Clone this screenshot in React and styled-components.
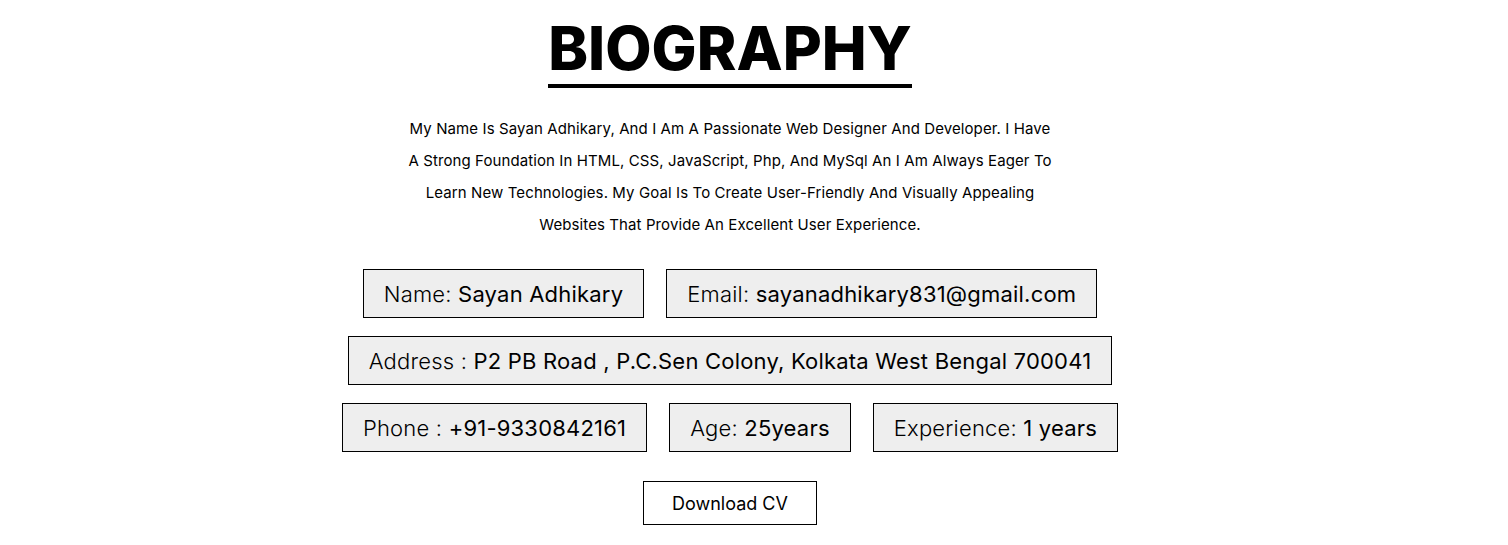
import React from 'react';
import styled, { createGlobalStyle } from 'styled-components';

const GlobalStyle = createGlobalStyle`
  * { box-sizing: border-box; }
  body {
    margin: 0;
    background: #fff;
    font-family: Inter, 'Noto Sans', sans-serif;
    color: #000;
  }
`;

const Section = styled.section`
  width: 1460px;
  padding-top: 14px;
  display: flex;
  flex-direction: column;
  align-items: center;
`;

const Title = styled.h1`
  display: inline-block;
  margin: 0;
  font-size: 60px;
  font-weight: 800;
  line-height: 68px;
  padding-bottom: 2px;
  border-bottom: 4px solid #000;
`;

const Intro = styled.p`
  margin: 25px 0 0;
  width: 648px;
  text-align: center;
  font-size: 15px;
  line-height: 32px;
  letter-spacing: 0.1px;
  text-transform: capitalize;
`;

const Details = styled.div`
  margin-top: 28px;
  display: flex;
  flex-direction: column;
  align-items: center;
  gap: 18px;
`;

const Row = styled.div`
  display: flex;
  justify-content: center;
  gap: 22px;
`;

const Item = styled.div`
  height: 49px;
  padding: 0 20px;
  display: flex;
  align-items: center;
  background: #eeeeee;
  border: 1px solid #000;
  font-size: 22px;
  letter-spacing: 0.2px;
  white-space: pre;
`;

const Label = styled.span`
  font-weight: 300;
`;

const Value = styled.span`
  font-weight: 400;
`;

const DownloadButton = styled.button`
  margin-top: 29px;
  width: 174px;
  height: 44px;
  background: #fff;
  border: 1px solid #000;
  font-family: inherit;
  font-size: 18px;
  color: #000;
  cursor: pointer;
`;

const rows = [
  [
    { label: 'Name: ', value: 'Sayan Adhikary' },
    { label: 'Email: ', value: 'sayanadhikary831@gmail.com' },
  ],
  [{ label: 'Address : ', value: 'P2 PB Road , P.C.Sen Colony, Kolkata West Bengal 700041' }],
  [
    { label: 'Phone : ', value: '+91-9330842161' },
    { label: 'Age: ', value: '25years' },
    { label: 'Experience: ', value: '1 years' },
  ],
];

const App = () => (
  <>
    <GlobalStyle />
    <Section>
      <Title>BIOGRAPHY</Title>
      <Intro>
        My name is Sayan Adhikary, and I am a passionate web designer and developer. I have
        a strong foundation in HTML, CSS, JavaScript, Php, and MySql an I am always eager to
        learn new technologies. My goal is to create user-friendly and visually appealing
        websites that provide an excellent user experience.
      </Intro>
      <Details>
        {rows.map((row, i) => (
          <Row key={i}>
            {row.map((item) => (
              <Item key={item.label}>
                <Label>{item.label}</Label>
                <Value>{item.value}</Value>
              </Item>
            ))}
          </Row>
        ))}
      </Details>
      <DownloadButton>Download CV</DownloadButton>
    </Section>
  </>
);

export default App;
